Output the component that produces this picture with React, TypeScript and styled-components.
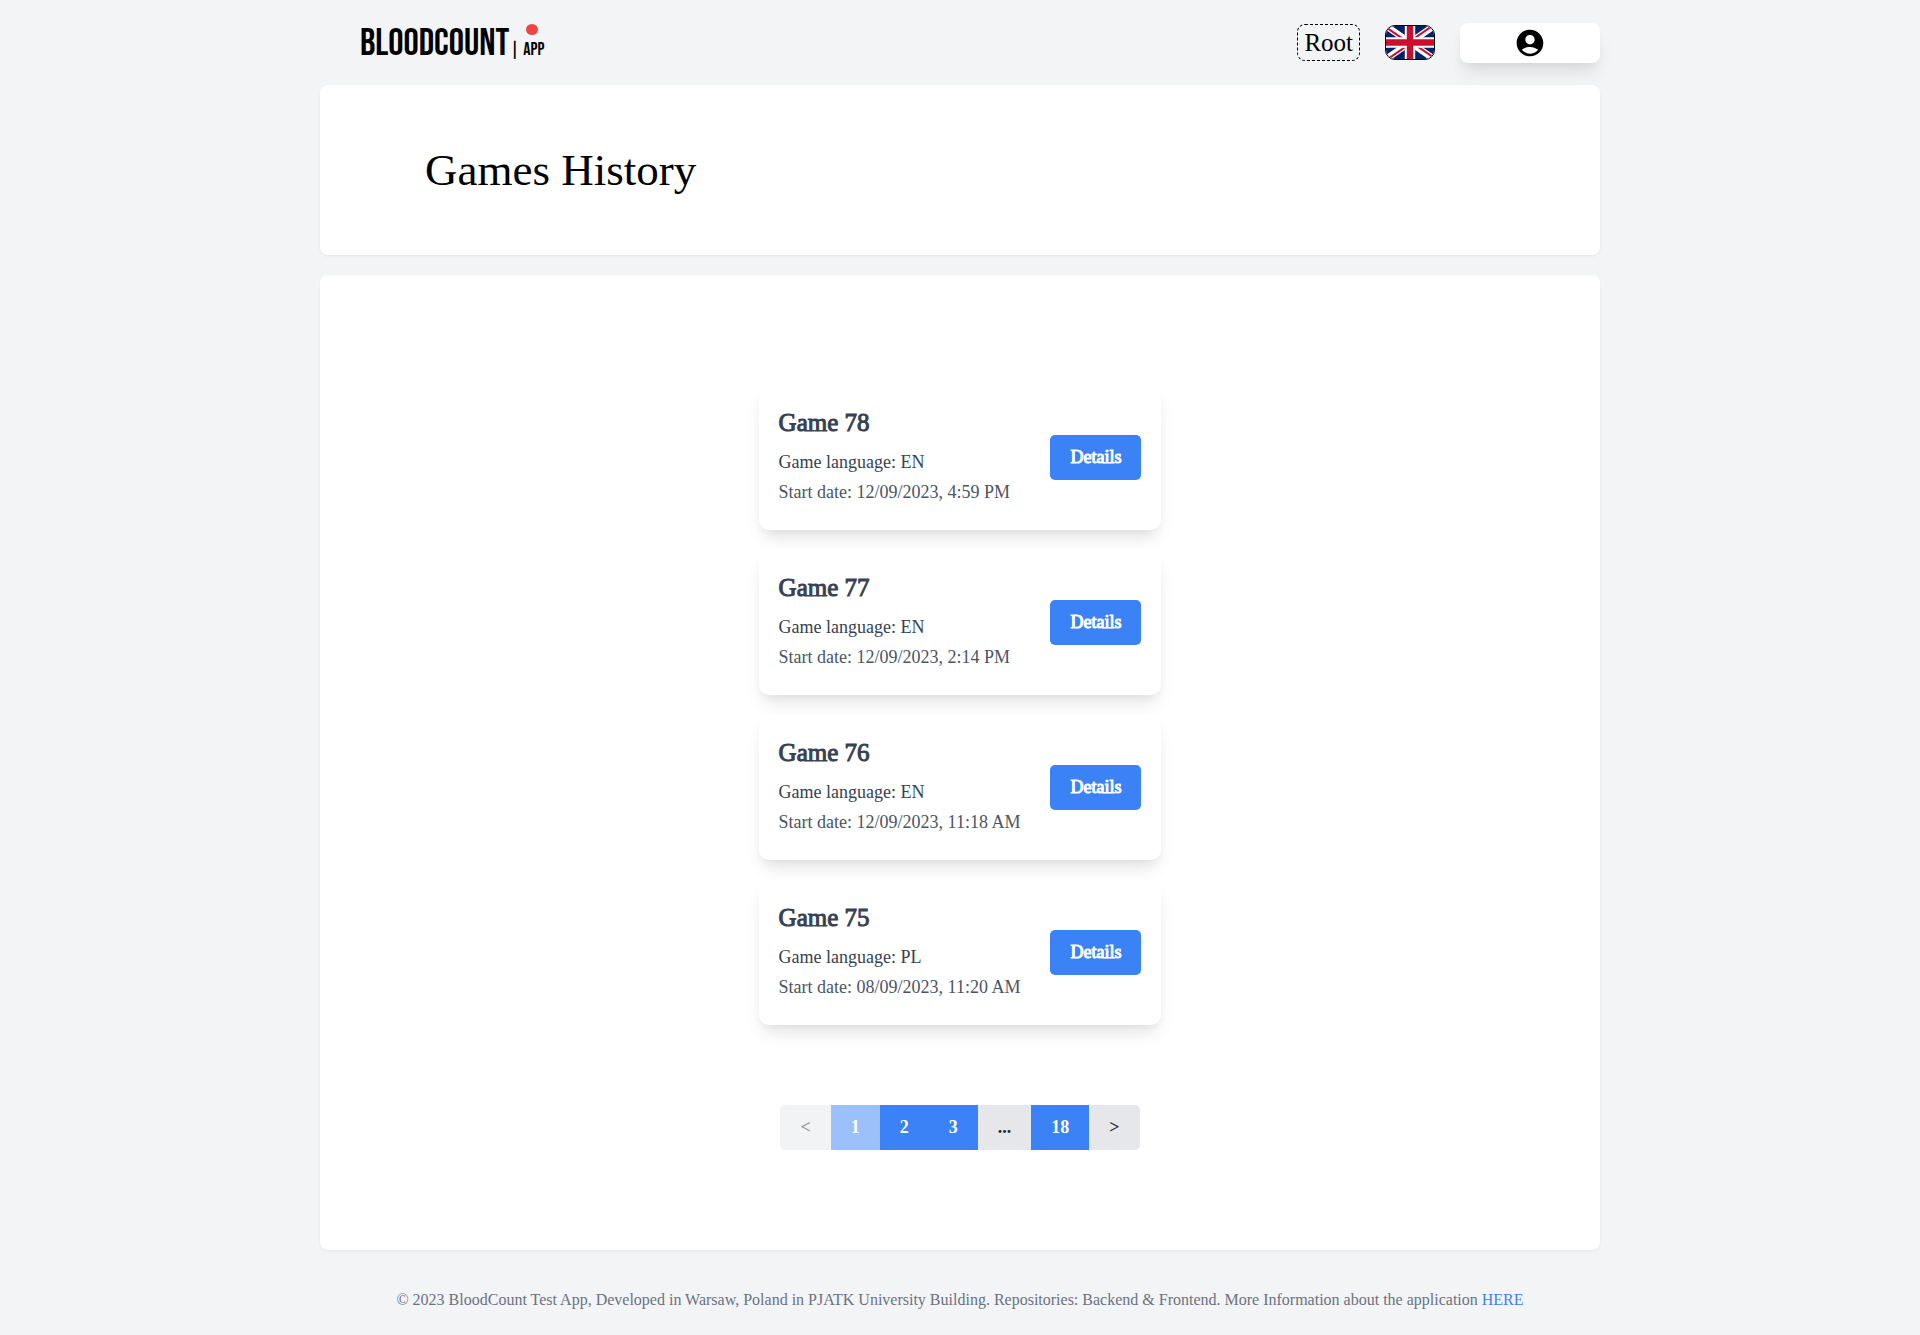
import React from "react";
import styled, { createGlobalStyle, css } from "styled-components";

const Global = createGlobalStyle`
  *, *::before, *::after { box-sizing: border-box; }
  body {
    margin: 0;
    background: #f3f4f6;
    color: #000;
    font-family: "Liberation Serif", "Times New Roman", serif;
    font-size: 18px;
    line-height: 25px;
  }
  h1, h2, p, ul { margin: 0; padding: 0; font-weight: inherit; }
  button { font-family: inherit; border: 0; margin: 0; cursor: pointer; }
`;

/* Thickens the regular face instead of switching to the wider bold one. */
const semibold = css`
  font-weight: 400;
  -webkit-text-stroke: 1px currentColor;
`;

const raised = css`
  background: #fff;
  box-shadow: 0 12px 18px -4px rgba(0, 0, 0, 0.1), 0 5px 8px -3px rgba(0, 0, 0, 0.05);
`;

const Page = styled.div`
  max-width: 1280px;
  min-height: 100vh;
  margin: 0 auto;
  display: flex;
  flex-direction: column;
`;

const Header = styled.header`
  display: flex;
  align-items: center;
  justify-content: space-between;
  height: 85px;
  padding-left: 40px;
`;

const Logo = styled.a`
  display: flex;
  align-items: baseline;
  gap: 1px;
  padding-top: 2px;
  color: #000;
  text-decoration: none;
  font-family: "Bebas Neue", "Liberation Sans Narrow", "Liberation Sans", sans-serif;
  font-weight: 400;
`;

const LogoName = styled.span`
  font-size: 38px;
  line-height: 45px;
`;

const LogoSuffix = styled.span`
  display: flex;
  gap: 4px;
  font-size: 18px;
  line-height: 20px;
`;

const LogoApp = styled.span`
  position: relative;
`;

const LogoDot = styled.span`
  position: absolute;
  top: -16px;
  left: 3px;
  width: 12px;
  height: 11px;
  border-radius: 50%;
  background: #ef4444;
`;

const Tools = styled.div`
  display: flex;
  align-items: center;
  gap: 25px;
`;

const Role = styled.span`
  padding: 0 6px;
  border: 1px dashed #000;
  border-radius: 8px;
  font-size: 25px;
  line-height: 35px;
`;

const FlagButton = styled.button`
  display: flex;
  width: 50px;
  height: 35px;
  padding: 0;
  overflow: hidden;
  border: 1px solid #000;
  border-radius: 10px;
  background: none;
`;

const AccountButton = styled.button`
  display: flex;
  align-items: center;
  justify-content: center;
  width: 140px;
  height: 40px;
  padding: 0;
  border-radius: 8px;
  ${raised}
`;

const Panel = styled.section`
  border-radius: 8px;
  background: #fff;
  box-shadow: 0 1px 3px rgba(0, 0, 0, 0.06);
`;

const TitlePanel = styled(Panel)`
  padding: 60px 105px;
`;

const Title = styled.h1`
  font-size: 45px;
  line-height: 50px;
`;

const HistoryPanel = styled(Panel)`
  display: flex;
  flex: 1;
  flex-direction: column;
  align-items: center;
  gap: 80px;
  margin-top: 20px;
  padding: 110px 20px 100px;
`;

const GameList = styled.ul`
  display: grid;
  gap: 20px;
  list-style: none;
`;

const GameCard = styled.li`
  display: flex;
  align-items: center;
  justify-content: space-between;
  gap: 30px;
  padding: 20px;
  border-radius: 10px;
  ${raised}
`;

const GameName = styled.h2`
  margin-bottom: 10px;
  color: #374151;
  font-size: 25px;
  line-height: 35px;
  ${semibold}
`;

const GameLine = styled.p<{ $color: string }>`
  margin-bottom: 5px;
  color: ${(p) => p.$color};
`;

const DetailsButton = styled.button`
  padding: 10px 20px;
  border-radius: 5px;
  background: #3b82f6;
  color: #fff;
  font-size: 18px;
  line-height: 25px;
  ${semibold}
`;

const Pager = styled.nav`
  display: flex;
  overflow: hidden;
  border-radius: 5px;
`;

const PageButton = styled.button`
  padding: 10px 20px;
  background: #3b82f6;
  color: #fff;
  font-size: 18px;
  font-weight: 700;
  line-height: 25px;
  &:disabled { opacity: 0.5; cursor: default; }
`;

const StepButton = styled(PageButton)`
  background: #e5e7eb;
  color: #1f2937;
`;

const PageGap = styled.span`
  padding: 10px 20px;
  background: #e5e7eb;
  color: #1f2937;
  font-weight: 700;
`;

const Footer = styled.footer`
  padding: 40px 20px 25px;
  color: #6b7280;
  font-size: 16px;
  line-height: 20px;
  text-align: center;
`;

const FooterLink = styled.a`
  color: #3b82f6;
  text-decoration: none;
`;

const UnionJack = () => (
  <svg viewBox="0 0 60 40" width="100%" height="100%" preserveAspectRatio="none" aria-hidden="true">
    <defs>
      <clipPath id="saltire">
        <path d="M30 20H60V40zM30 20V40H0zM30 20H0V0zM30 20V0H60z" />
      </clipPath>
    </defs>
    <path fill="#012169" d="M0 0H60V40H0z" />
    <path stroke="#fff" strokeWidth="8" d="M0 0L60 40M60 0L0 40" />
    <path stroke="#c8102e" strokeWidth="5" clipPath="url(#saltire)" d="M0 0L60 40M60 0L0 40" />
    <path stroke="#fff" strokeWidth="13" d="M30 0V40M0 20H60" />
    <path stroke="#c8102e" strokeWidth="8" d="M30 0V40M0 20H60" />
  </svg>
);

const AccountIcon = () => (
  <svg viewBox="0 0 24 24" width="32" height="32" aria-hidden="true">
    <path d="M12 2C6.48 2 2 6.48 2 12s4.48 10 10 10 10-4.48 10-10S17.52 2 12 2m0 4c1.93 0 3.5 1.57 3.5 3.5S13.93 13 12 13s-3.5-1.57-3.5-3.5S10.07 6 12 6m0 14c-2.03 0-4.43-.82-6.14-2.88C7.55 15.8 9.68 15 12 15s4.45.8 6.14 2.12C16.43 19.18 14.03 20 12 20" />
  </svg>
);

const games = [
  { id: 78, language: "EN", start: "12/09/2023, 4:59 PM" },
  { id: 77, language: "EN", start: "12/09/2023, 2:14 PM" },
  { id: 76, language: "EN", start: "12/09/2023, 11:18 AM" },
  { id: 75, language: "PL", start: "08/09/2023, 11:20 AM" },
];

export default function App() {
  return (
    <>
      <Global />
      <Page>
        <Header>
          <Logo href="#">
            <LogoName>BLOODCOUNT</LogoName>
            <LogoSuffix>
              <span>|</span>
              <LogoApp>
                APP
                <LogoDot />
              </LogoApp>
            </LogoSuffix>
          </Logo>
          <Tools>
            <Role>Root</Role>
            <FlagButton aria-label="Change language">
              <UnionJack />
            </FlagButton>
            <AccountButton aria-label="Account">
              <AccountIcon />
            </AccountButton>
          </Tools>
        </Header>
        <TitlePanel>
          <Title>Games History</Title>
        </TitlePanel>
        <HistoryPanel>
          <GameList>
            {games.map((game) => (
              <GameCard key={game.id}>
                <div>
                  <GameName>Game {game.id}</GameName>
                  <GameLine $color="#374151">Game language: {game.language}</GameLine>
                  <GameLine $color="#4b5563">Start date: {game.start}</GameLine>
                </div>
                <DetailsButton>Details</DetailsButton>
              </GameCard>
            ))}
          </GameList>
          <Pager aria-label="Pages">
            <StepButton disabled>&lt;</StepButton>
            <PageButton disabled>1</PageButton>
            <PageButton>2</PageButton>
            <PageButton>3</PageButton>
            <PageGap>...</PageGap>
            <PageButton>18</PageButton>
            <StepButton>&gt;</StepButton>
          </Pager>
        </HistoryPanel>
        <Footer>
          © 2023 BloodCount Test App, Developed in Warsaw, Poland in PJATK University Building. Repositories: Backend
          &amp; Frontend. More Information about the application <FooterLink href="#">HERE</FooterLink>
        </Footer>
      </Page>
    </>
  );
}
